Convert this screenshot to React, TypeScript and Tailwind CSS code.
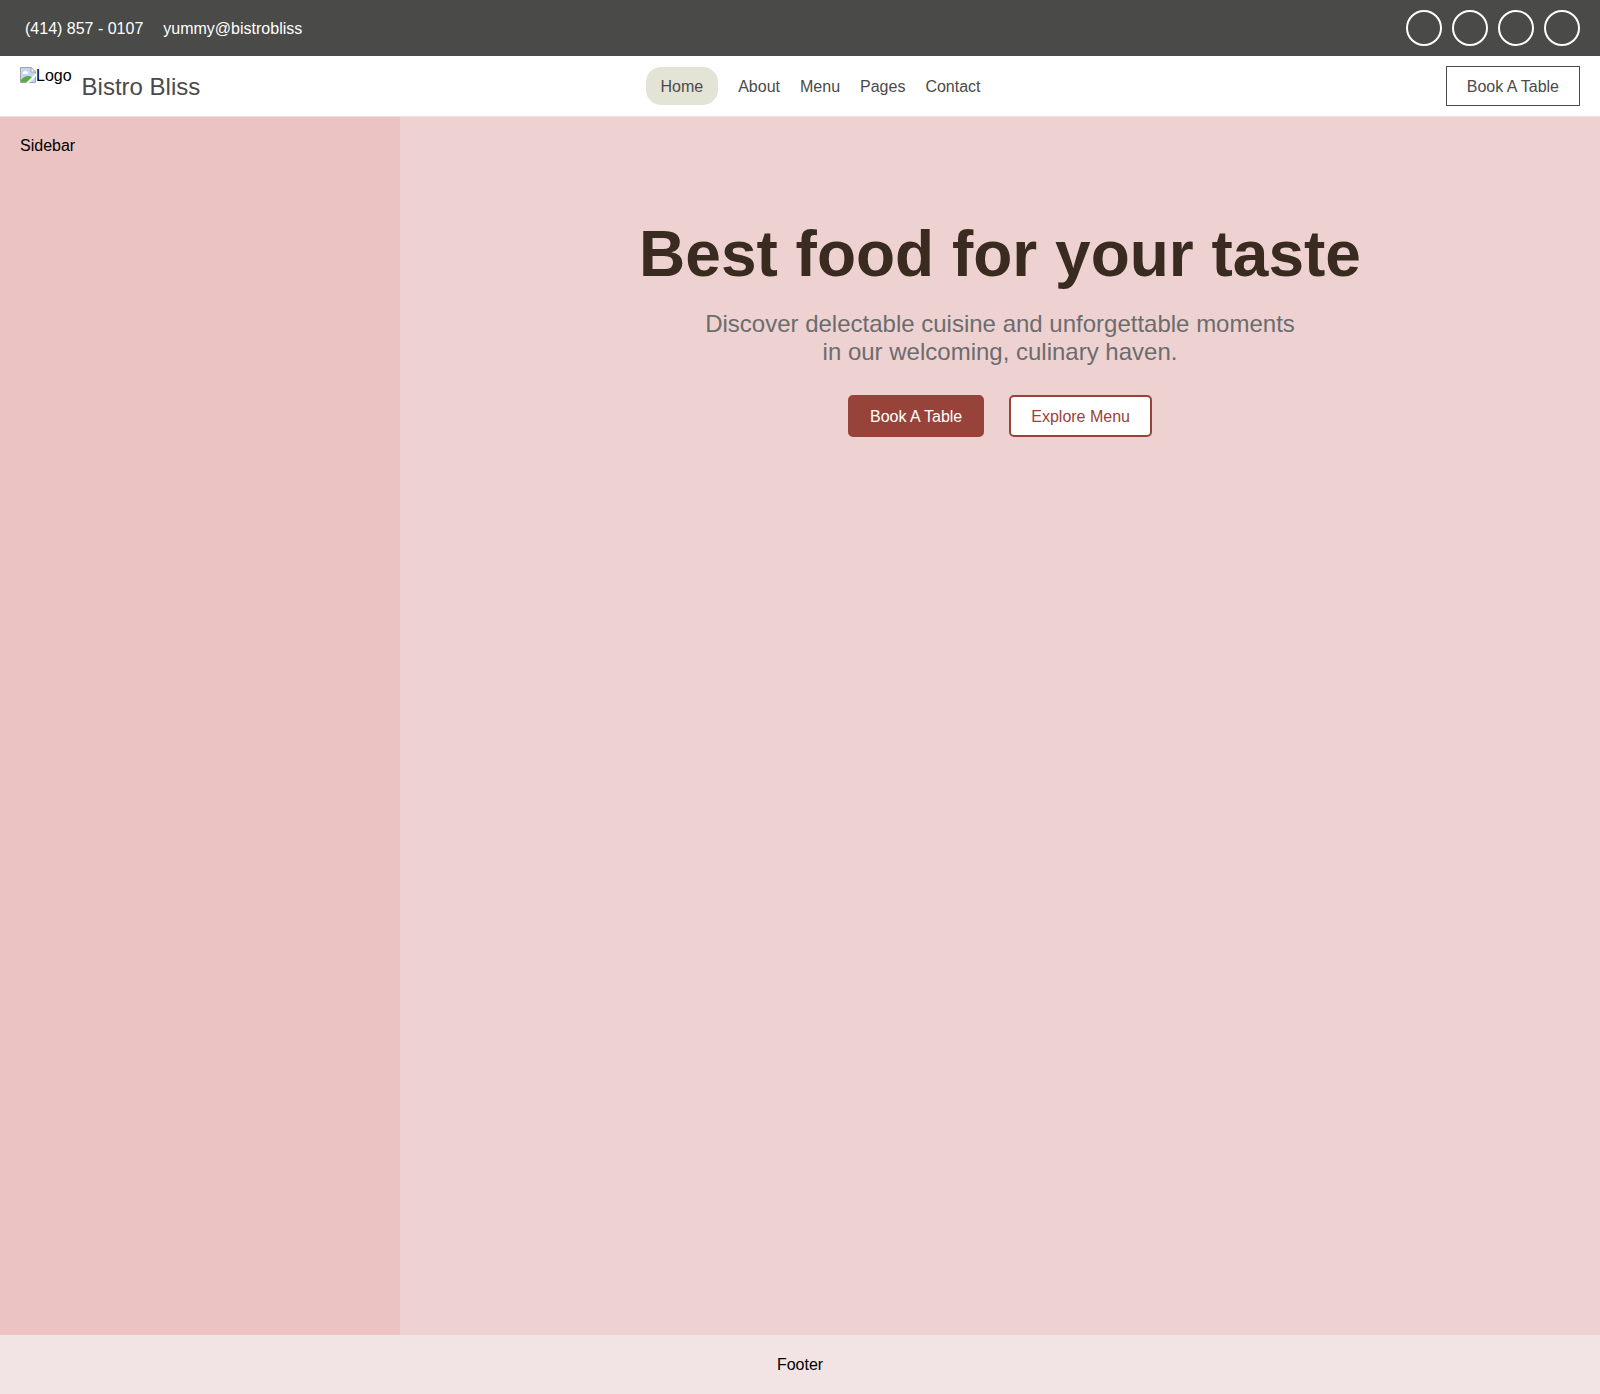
const navItems = ["About", "Menu", "Pages", "Contact"];
const socials = ["Twitter", "Facebook", "Instagram", "GitHub"];

function MissingImageIcon() {
  return (
    <svg width="16" height="16" viewBox="0 0 16 16" aria-hidden="true">
      <path d="M.5 .5H11L15.5 5V15.5H.5Z" fill="#c4d5f5" stroke="#a3a3a3" />
      <path d="M11 .5V5H15.5Z" fill="#fff" stroke="#a3a3a3" />
      <path d="M3 7a1.500 1.500 0 0 1 1-2.500 2 2 0 0 1 3.500 .5A1.200 1.200 0 0 1 8 7Z" fill="#fff" />
      <path d="M1 15V13C3 10.500 5.500 9 8 9C9.500 9 11 9.500 12 10.500L7 15Z" fill="#5cad3f" />
      <path d="M16 6.500V9L9 16H6.200L15.700 6.500Z" fill="#fff" />
    </svg>
  );
}

export default function App() {
  return (
    <div className="flex min-h-screen flex-col bg-[#f2e4e4] font-['Liberation_Sans',Arial,sans-serif] text-base leading-[18px] text-black">
      <header>
        <div className="flex h-14 items-center justify-between bg-[#4a4a48] px-5 text-white">
          <div className="flex gap-5 pt-0.5 pl-[5px]">
            <a href="tel:4148570107">(414) 857 - 0107</a>
            <a href="mailto:yummy@bistrobliss">yummy@bistrobliss</a>
          </div>
          <div className="flex gap-2.5">
            {socials.map((name) => (
              <a
                key={name}
                href="#"
                aria-label={name}
                className="size-9 rounded-full border-2 border-white"
              />
            ))}
          </div>
        </div>
        <div className="flex items-center justify-between border-b border-[#efdfdf] bg-white px-5 py-2.5 text-[#4a4a4a]">
          <div className="flex h-10 items-center gap-2.5">
            <span role="img" aria-label="Logo" className="flex h-10 items-start pt-px text-black">
              <MissingImageIcon />
              Logo
            </span>
            <span className="pt-0.5 text-2xl leading-7">Bistro Bliss</span>
          </div>
          <nav className="flex items-center gap-5 pr-5 leading-5">
            <a href="#" className="rounded-[15px] bg-[#e3e4d6] px-[15px] pt-2.5 pb-2">
              Home
            </a>
            {navItems.map((item) => (
              <a key={item} href="#" className="pt-2.5 pb-2">
                {item}
              </a>
            ))}
          </nav>
          <button type="button" className="h-10 border border-[#4a4a4a] px-5 pt-0.5">
            Book A Table
          </button>
        </div>
      </header>

      <div className="flex flex-1">
        <aside className="w-1/4 bg-[#ebc3c3] p-5">Sidebar</aside>
        <main className="flex flex-1 flex-col items-center bg-[#eed2d2] px-5 py-[100px] text-center">
          <h1 className="text-[64px] leading-[74px] font-bold text-[#3a2b20]">
            Best food for your taste
          </h1>
          <p className="mt-[19px] max-w-[600px] text-2xl leading-7 text-[#6c6c6c]">
            Discover delectable cuisine and unforgettable moments in our welcoming, culinary haven.
          </p>
          <div className="mt-[29px] flex gap-[25px] leading-5">
            <button
              type="button"
              className="rounded-[5px] border-2 border-[#984339] bg-[#984339] px-5 pt-2.5 pb-2 text-white"
            >
              Book A Table
            </button>
            <button
              type="button"
              className="rounded-[5px] border-2 border-[#984339] bg-white px-5 pt-2.5 pb-2 text-[#984339]"
            >
              Explore Menu
            </button>
          </div>
        </main>
      </div>

      <footer className="p-5 text-center leading-[19px]">Footer</footer>
    </div>
  );
}
